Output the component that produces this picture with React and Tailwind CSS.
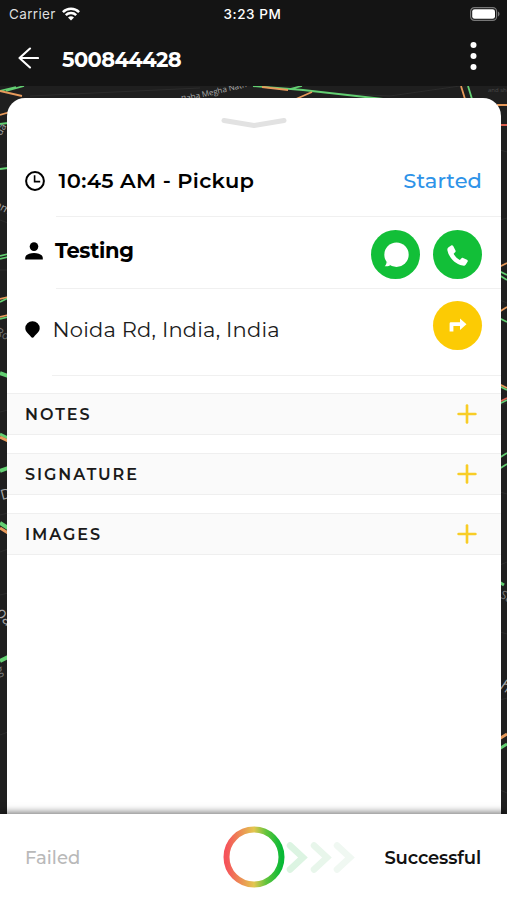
import { LuPlus } from 'react-icons/lu';

const SECTIONS = ['NOTES', 'SIGNATURE', 'IMAGES'];

/** Dark traffic map that stays visible around the sheet. */
function TrafficMap() {
  return (
    <svg className="absolute inset-0 h-full w-full" viewBox="0 86 507 728" preserveAspectRatio="none" fill="none">
      <rect y="86" width="507" height="728" fill="#1f1f1f" />
      <g stroke="#2c2c2c" strokeWidth="1">
        <path d="M30 96 200 88M300 92l90 4 70-10M0 165l8-2M0 220l8 3M0 270h8M0 412l8-2M0 515l8-2M0 552l8-3M0 595l8-2M0 735l8-3M500 150l7 2M500 220l7-2M500 300l7 3M500 405l7-2M500 492l7 2M500 565l7-3M500 632l7 2M500 700l7-2M500 790l7 3" />
      </g>
      <g stroke="#63cf72" strokeWidth="1.8">
        <path d="M0 91 16 87M6 91 24 86M0 124l8-1M0 169l8-1M0 256l8-2M0 259l8-2M0 302l8-4M0 319l8-2M253 86l50 4 80 9M290 89l12-3M468 86l4 13M499 271l8 4M499 275l8 5M499 318l8 4M499 386l8 4M499 404l8-4M499 458l8-5M499 469l8-5" />
        <path strokeWidth="4" d="M0 373l8 3M0 471l8-3M0 523l8 5M0 661l8-4" />
        <path strokeWidth="3" d="M0 434l8 4M499 582l5 3M499 749l8-5" />
      </g>
      <g stroke="#e79a5b" strokeWidth="1.8">
        <path d="M0 91 22 96M0 115l10-3M0 299l8-2M0 317l8-2M262 87l26 3M296 99l16-7M461 86l4 13M497 105h10M499 267l8-4M499 312l8-5M499 384l8 4" />
        <path strokeWidth="3" d="M0 437l8 4M0 528l8 5M499 739l8-5" />
      </g>
      <path d="M498 125h9M499 402l8-4" stroke="#d95f4f" strokeWidth="1.8" />
      <g fill="#a9a9a9" fontFamily="Open Sans, sans-serif">
        <text x="182" y="102" fontSize="8" transform="rotate(-13 182 102)">Baba Megha Nath</text>
        <text x="488" y="92" fontSize="6" fill="#4b4b4b">and sho</text>
        <text x="1" y="136" fontSize="10" transform="rotate(-60 1 136)">da</text>
        <text x="-6" y="207" fontSize="11" transform="rotate(28 -6 207)">am</text>
        <text x="-5" y="334" fontSize="11" fill="#777" transform="rotate(28 -5 334)">Ro</text>
        <text x="2" y="500" fontSize="14" transform="rotate(-15 2 500)">D</text>
        <text x="-5" y="613" fontSize="16" transform="rotate(50 -5 613)">oa</text>
        <text x="-3" y="675" fontSize="13" fill="#777" transform="rotate(-15 -3 675)">g</text>
        <text x="499" y="597" fontSize="12" fill="#777" transform="rotate(30 499 597)">Sa</text>
        <text x="499" y="688" fontSize="15" transform="rotate(35 499 688)">ha</text>
      </g>
    </svg>
  );
}

function StatusBar() {
  return (
    <div className="grid h-7 grid-cols-3 items-center pr-[7px] pl-[9px] font-['Inter',sans-serif] text-[13.5px] text-white">
      <div className="flex items-center gap-[6px]">
        <span className="tracking-[0.35px] text-[#dedede]">Carrier</span>
        <svg className="mt-[-1px] h-[14px] w-[18px]" viewBox="0 0 18 14" fill="none" stroke="#fff" strokeWidth="2.5">
          <path d="M.9 5.2a11.5 11.5 0 0 1 16.2 0M3.8 8.2a7.4 7.4 0 0 1 10.4 0" />
          <path d="m9 13.6-3-3a4.3 4.3 0 0 1 6 0Z" fill="#fff" stroke="none" />
        </svg>
      </div>
      <span className="-ml-1 text-center font-medium tracking-[0.6px]">3:23 PM</span>
      <svg className="mt-[-1px] h-[14px] w-[30px] justify-self-end" viewBox="0 0 30 14" fill="none">
        <rect x=".6" y=".6" width="26" height="12.8" rx="3.8" stroke="#777" strokeWidth="1.2" />
        <rect x="2.2" y="2.2" width="22.8" height="9.6" rx="2.4" fill="#fff" />
        <path d="M28 4.6c2 .8 2 4 0 4.8Z" fill="#777" />
      </svg>
    </div>
  );
}

function NavBar() {
  return (
    <div className="flex h-[58px] items-center pb-[1px] pl-[18px] text-white">
      <svg className="mt-[3px] h-[22px] w-[21px]" viewBox="0 0 21 22" fill="none" stroke="currentColor" strokeWidth="2.1" strokeLinecap="round" strokeLinejoin="round">
        <path d="M20 11H1.5M12 1.5 1.5 11 12 20.5" />
      </svg>
      <h1 className="mt-[6px] ml-[23px] text-[21px] font-bold tracking-[-0.6px]">500844428</h1>
      <svg className="mt-[-1px] mr-[30.5px] ml-auto h-7 w-[7px]" viewBox="0 0 7 28" fill="currentColor">
        <circle cx="3.5" cy="3" r="3" />
        <circle cx="3.5" cy="14" r="3" />
        <circle cx="3.5" cy="25" r="3" />
      </svg>
    </div>
  );
}

function RoundButton({ className, children }) {
  return (
    <button className={`flex size-[49px] items-center justify-center rounded-full ${className}`}>
      {children}
    </button>
  );
}

function TaskDetails() {
  return (
    <div className="pl-[18px]">
      <div className="flex h-[72px] items-center pt-[2px] pr-[19px]">
        <svg className="mt-[-1px] size-5" viewBox="0 0 20 20" fill="none" stroke="#000">
          <circle cx="10" cy="10" r="8.9" strokeWidth="2" />
          <path d="M9.6 4.3v6.3h5.6" strokeWidth="1.6" />
        </svg>
        <span className="ml-[13.5px] text-[21px] font-semibold tracking-[0.33px]">10:45 AM - Pickup</span>
        <span className="ml-auto text-[21px] font-medium tracking-[0.05px] text-[#2e93e8]">Started</span>
      </div>
      <div className="ml-[31px] h-px bg-[#f0f0f0]" />

      <div className="flex h-[71px] items-center pr-[19px]">
        <svg className="mb-1 h-[18px] w-[18px]" viewBox="0 0 18 18" fill="#000">
          <circle cx="9" cy="4.6" r="4.3" />
          <path d="M.2 17.6v-1.7C.2 12.7 4.700 11 9 11s8.800 1.700 8.800 4.900v1.700Z" />
        </svg>
        <span className="mb-[4px] ml-[12px] text-[21px] font-bold tracking-[-0.35px]">Testing</span>
        <div className="mt-[4px] ml-auto flex gap-[13px]">
          <RoundButton className="bg-[#12bf38]">
            <svg className="h-[26px] w-[26px]" viewBox="0 0 26 26" fill="#fff">
              <circle cx="13.5" cy="12.7" r="12.2" />
              <path d="M3.600 19.500c0 2-.5 3.400-1.900 4.700 2.300.4 4.300.1 6-1.200Z" />
            </svg>
          </RoundButton>
          <RoundButton className="bg-[#12bf38]">
            <svg className="mt-[2px] h-[23px] w-[23px]" viewBox="0 0 24 24" fill="#fff">
              <path d="M5.400 1.500 2.700 3.300C1.600 4 1.200 5.300 1.500 6.700 3.300 14.700 9.300 20.700 17.300 22.500c1.400.3 2.700-.1 3.400-1.200l1.800-2.700c.5-.8.2-1.700-.6-2.100l-4.100-1.900c-.7-.3-1.400-.1-1.900.5l-1.500 1.500c-2.800-1.400-5-3.600-6.400-6.400l1.500-1.500c.5-.5.700-1.200.4-1.900L7.500 2.100C7.100 1.300 6.200 1 5.400 1.500Z" />
            </svg>
          </RoundButton>
        </div>
      </div>
      <div className="ml-[31px] h-px bg-[#f0f0f0]" />

      <div className="flex h-[86px] items-center pr-[19px]">
        <svg className="mt-[-5px] h-[17px] w-[15px]" viewBox="0 0 15 17" fill="#000">
          <path d="M7.500.2A7.100 7.100 0 0 0 .3 7.300c0 3.500 3.500 5.700 5.800 8.700.8 1.100 2 1.100 2.800 0 2.300-3 5.800-5.200 5.800-8.700A7.100 7.100 0 0 0 7.500.2Z" />
        </svg>
        <span className="mt-[-5px] ml-[12.5px] text-[21px] tracking-[0.2px] text-[#1c1c1c]">Noida Rd, India, India</span>
        <RoundButton className="mt-[-14px] ml-auto bg-[#fccb04]">
          <svg className="h-[14px] w-[18px]" viewBox="0 0 18 14" fill="#fff">
            <path d="M.6 13.500V5.500Q.6 4.300 1.800 4.300H11V.500L17.500 6.300 11 12V8H4.400v5.500Z" />
          </svg>
        </RoundButton>
      </div>
      <div className="ml-[27px] h-px bg-[#f0f0f0]" />
    </div>
  );
}

function SectionRow({ label }) {
  return (
    <div className="flex h-[42px] items-center border-y-[1.5px] border-[#efefef] bg-[#fafafa] pr-[22px] pl-[18px]">
      <span className="mt-[2px] text-[16px] font-semibold tracking-[1.95px] text-[#1a1a1a]">{label}</span>
      <LuPlus className="ml-auto size-6 text-[#f8cd26]" strokeWidth={2.2} viewBox="2 2 20 20" />
    </div>
  );
}

function SwipeBar() {
  return (
    <footer className="relative flex h-[86px] items-center bg-white px-[26px] text-[18px] font-medium shadow-[0_-2px_7px_rgba(0,0,0,0.5)]">
      <span className="mt-[2px] ml-[-1px] w-[198px] text-[#b9b9b9]">Failed</span>
      <svg className="h-[62px] w-[132px]" viewBox="0 0 132 62" fill="none">
        <defs>
          <linearGradient id="ring">
            <stop offset="0" stopColor="#f5535a" />
            <stop offset=".5" stopColor="#e3c64f" />
            <stop offset=".72" stopColor="#62c43d" />
            <stop offset="1" stopColor="#08b936" />
          </linearGradient>
        </defs>
        <g strokeWidth="6.500" strokeLinecap="round">
          <path d="m67 19.500 13 12-13 12" stroke="#dcf4e2" />
          <path d="m91 19.500 13 12-13 12" stroke="#e8f6eb" />
          <path d="m114 19.500 13 12-13 12" stroke="#f0f8f2" />
        </g>
        <circle cx="31" cy="31" r="27.500" fill="#fff" stroke="url(#ring)" strokeWidth="6" />
      </svg>
      <span className="mt-[2px] ml-auto font-semibold tracking-[-0.15px] text-[#111]">Successful</span>
    </footer>
  );
}

export default function App() {
  return (
    <div className="flex h-[900px] w-[507px] flex-col overflow-hidden bg-[#141414] font-['Montserrat','Inter',sans-serif] text-black">
      <header>
        <StatusBar />
        <NavBar />
      </header>
      <main className="relative flex-1 pt-[12px] pr-[6px] pl-[7px]">
        <TrafficMap />
        <div className="relative h-full rounded-t-[18px] bg-white">
          <div className="flex h-[46px] justify-center pt-[19px]">
            <svg className="h-[12px] w-[66px]" viewBox="0 0 66 12" fill="none" stroke="#e2e2e2" strokeWidth="5" strokeLinecap="round" strokeLinejoin="round">
              <path d="M3 3.500 33 8.500 63 3.500" />
            </svg>
          </div>
          <TaskDetails />
          <div className="mt-[17px] flex flex-col gap-[18px]">
            {SECTIONS.map((label) => (
              <SectionRow key={label} label={label} />
            ))}
          </div>
        </div>
      </main>
      <SwipeBar />
    </div>
  );
}
